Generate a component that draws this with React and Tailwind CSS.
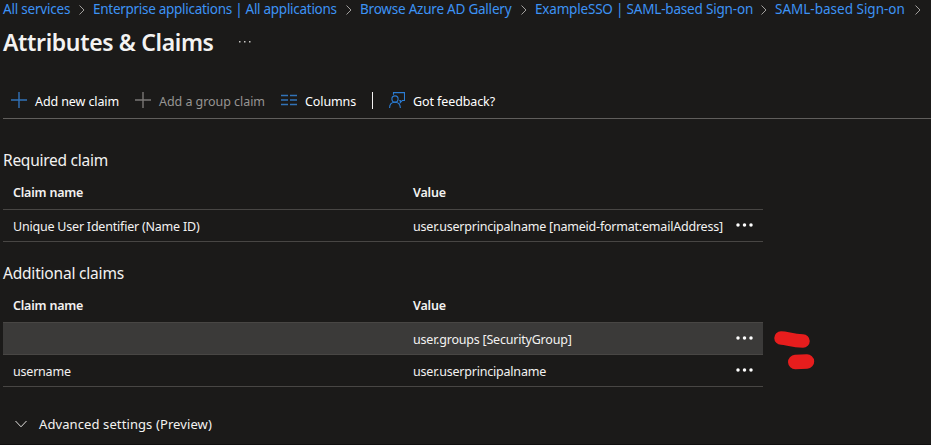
const crumbs = [
  { label: 'All services', box: 'w-[68px] tracking-[-0.2px]' },
  { label: 'Enterprise applications | All applications', box: 'w-[245px] tracking-[-0.28px]' },
  { label: 'Browse Azure AD Gallery', box: 'w-[153px] tracking-[-0.22px]' },
  { label: 'ExampleSSO | SAML-based Sign-on', box: 'w-[218px] tracking-[-0.19px]' },
  { label: 'SAML-based Sign-on', box: 'w-[132px]' },
];

function Crumb({ label, box }) {
  return (
    <>
      <a className={`${box} shrink-0 text-[#3d93f5]`}>{label}</a>
      <svg className="mx-[7px] mt-px h-[10px] w-2 shrink-0" viewBox="0 0 8 10" fill="none" stroke="#a19f9d">
        <path d="M1.5 0.5 L6 5 L1.5 9.5" />
      </svg>
    </>
  );
}

function Plus({ color }) {
  return (
    <svg className="h-4 w-4 shrink-0" viewBox="0 0 16 16" stroke={color} strokeWidth="1.4">
      <path d="M0 8H16M8 0V16" />
    </svg>
  );
}

function ColumnsIcon() {
  return (
    <svg className="h-4 w-4 shrink-0" viewBox="0 0 16 16" stroke="#3273b8" strokeWidth="1.4">
      <path d="M0 3.5H7M9 3.5H16M0 8H7M9 8H16M0 12.5H7M9 12.5H16" />
    </svg>
  );
}

function FeedbackIcon() {
  return (
    <svg className="h-4 w-4 shrink-0" viewBox="0 0 16 16" fill="none" stroke="#2b7cd3" strokeWidth="1.1">
      <path d="M4.5 2.8V0.6H15.5V8.5H13.3L11.3 10.7V8.5H10.3" />
      <circle cx="6" cy="7" r="3.1" />
      <path d="M0.6 16C0.6 12.5 2.8 10.3 6 10.3S11.2 12.5 11.4 16" />
    </svg>
  );
}

function More() {
  return (
    <svg className="mb-[2px] h-1 w-[17px]" viewBox="0 0 17 4" fill="#ffffff">
      <circle cx="2" cy="2" r="1.75" />
      <circle cx="8.5" cy="2" r="1.75" />
      <circle cx="15" cy="2" r="1.75" />
    </svg>
  );
}

function HeaderRow() {
  return (
    <div className="flex h-9 w-[760px] items-center border-b border-[#484644] pl-[10px] pt-[2px] font-semibold tracking-[-0.2px]">
      <span className="w-[400px]">Claim name</span>
      <span>Value</span>
    </div>
  );
}

function Row({ name, value, selected }) {
  return (
    <div className={`flex h-8 w-[760px] items-center border-b border-[#484644] pl-[10px] tracking-[-0.21px] ${selected ? 'bg-[#3b3a39]' : ''}`}>
      <span className="w-[400px] pt-[3px]">{name}</span>
      <span className="w-[323px] whitespace-nowrap pt-[3px]">{value}</span>
      <More />
    </div>
  );
}

export default function App() {
  return (
    <div className="relative h-[445px] w-[931px] overflow-hidden border-b border-[#100f0f] bg-[#1b1a19] pl-[3px] font-['Noto_Sans',sans-serif] text-[12.5px] leading-[18px] text-[#f3f2f1]">
      <nav className="flex h-[18px] items-center whitespace-nowrap text-[13.5px]">
        {crumbs.map((c) => <Crumb key={c.label + c.box} {...c} />)}
      </nav>
      <header className="flex h-[48px] items-center">
        <h1 className="w-[236px] whitespace-nowrap text-[23px] font-semibold leading-8 tracking-[-0.36px]">Attributes &amp; Claims</h1>
        <svg className="h-[2px] w-3" viewBox="0 0 12 2" fill="#c8c6c4">
          <path d="M0 0h1.5v1.5h-1.5zM5 0h1.5v1.5h-1.5zM10 0h1.5v1.5h-1.5z" />
        </svg>
      </header>
      <div className="flex h-[53px] items-center whitespace-nowrap border-b border-[#605e5c] pl-2 pt-4 tracking-[-0.1px] text-white">
        <Plus color="#3273b8" />
        <span className="ml-2 w-[100px] pt-[3px]">Add new claim</span>
        <Plus color="#797775" />
        <span className="ml-2 w-[122px] pt-[3px] tracking-[-0.05px] text-[#979593]">Add a group claim</span>
        <ColumnsIcon />
        <span className="ml-2 w-[67px] pt-[3px]">Columns</span>
        <span className="mr-4 h-[17px] w-px bg-[#f3f2f1]" />
        <FeedbackIcon />
        <span className="ml-2 pt-[3px]">Got feedback?</span>
      </div>
      <h2 className="mt-[29px] h-[26px] text-[15.5px] leading-6 tracking-[-0.26px]">Required claim</h2>
      <HeaderRow />
      <Row name="Unique User Identifier (Name ID)" value="user.userprincipalname [nameid-format:emailAddress]" />
      <h2 className="mt-[19px] h-[26px] text-[15.5px] leading-6 tracking-[-0.2px]">Additional claims</h2>
      <HeaderRow />
      <Row name="" value="user.groups [SecurityGroup]" selected />
      <Row name="username" value="user.userprincipalname" />
      <div className="mt-[26px] flex h-[22px] items-center">
        <svg className="ml-3 mr-3 h-2 w-3" viewBox="0 0 12 8" fill="none" stroke="#e1dfdd">
          <path d="M0.5 1 L6 6.8 L11.5 1" />
        </svg>
        <span className="text-[13px] tracking-[0.1px]">Advanced settings (Preview)</span>
      </div>
      <svg className="absolute left-[770px] top-[326px] h-12 w-12" viewBox="0 0 48 48" stroke="#e71d1d" fill="none" strokeLinecap="round">
        <path d="M11 12C17 12 22 15 33 15" strokeWidth="13.5" />
        <path d="M25.2 36L37 35.5" strokeWidth="14.4" />
      </svg>
    </div>
  );
}
